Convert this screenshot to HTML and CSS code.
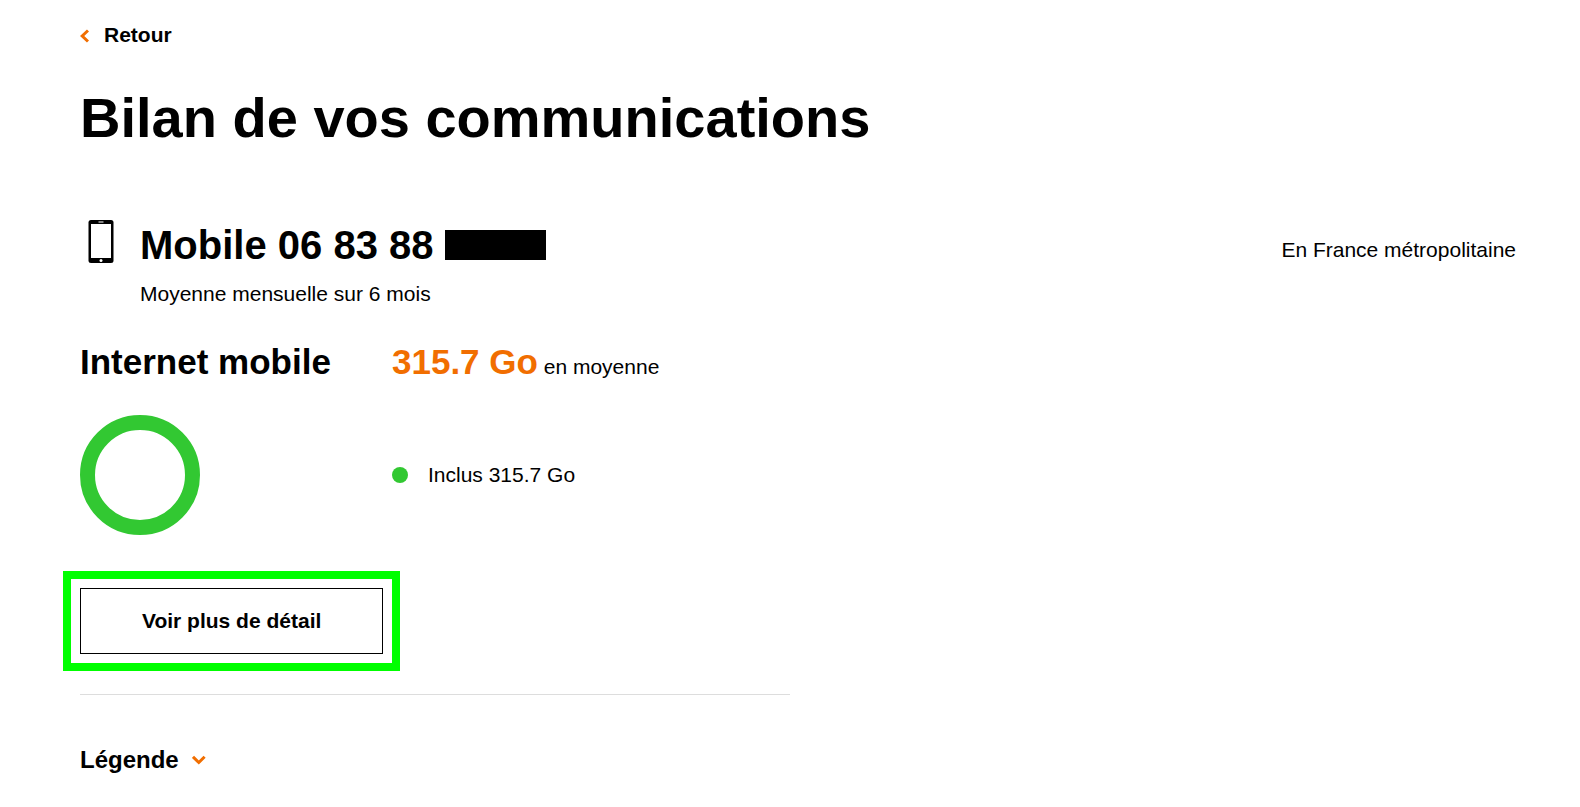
FILE: index.html
```
<!DOCTYPE html>
<html lang="fr">
<head>
    <meta charset="UTF-8">
    <meta name="viewport" content="width=device-width, initial-scale=1.0">
    <title>Bilan de vos communications</title>
    <link rel="stylesheet" href="styles.css">
</head>
<body>
    <header>
        <a class="retour" href="#">
            <svg class="chevron-gauche" width="9" height="14" viewBox="0 0 9 14" aria-hidden="true">
                <path d="M8 1.500 2.200 7 8 12.500"/>
            </svg>
            Retour
        </a>
        <h1>Bilan de vos communications</h1>
    </header>

    <main>
        <div class="ligne">
            <svg class="mobile" width="26" height="43" viewBox="0 0 26 43" aria-hidden="true">
                <rect x="0.500" width="25" height="43" rx="2.500"/>
                <path class="blanc" d="M3 4h20v34H3zM10.500 1.600h5v1h-5z"/>
                <circle class="blanc" cx="13" cy="40.500" r="1.500"/>
            </svg>
            <div class="numero">
                <h2>Mobile 06 83 88 <span class="masque"></span></h2>
                <p>Moyenne mensuelle sur 6 mois</p>
            </div>
            <p class="zone">En France métropolitaine</p>
        </div>

        <div class="colonnes">
            <section class="bilan">
                <div class="conso">
                    <h3>Internet mobile</h3>
                    <p><strong>315.7 Go</strong> en moyenne</p>
                </div>
                <div class="conso graphique">
                    <div class="anneau"></div>
                    <p class="inclus"><span class="puce"></span>Inclus 315.7 Go</p>
                </div>
                <button class="detail" type="button">Voir plus de détail</button>
                <hr>
                <button class="legende" type="button">
                    Légende
                    <svg class="chevron-bas" width="14" height="10" viewBox="0 0 14 10" aria-hidden="true">
                        <path d="M1 1.800 6.800 7.500 12.600 1.800"/>
                    </svg>
                </button>
            </section>
        </div>
    </main>
</body>
</html>
```

FILE: styles.css
```
:root{
    --orange: #f16e00;
    --vert: #32c832;
    --cadre: #00ff00;
}

*{
    margin: 0;
    padding: 0;
    box-sizing: border-box;
}

body{
    background-color: white;
    color: black;
    font-family: "Liberation Sans", Arial, Helvetica, sans-serif;
    font-size: 21px;
    line-height: 24px;
    padding: 23px 40px 32px 80px;
}

.retour{
    display: inline-flex;
    align-items: center;
    gap: 15px;
    color: black;
    font-weight: bold;
    text-decoration: none;
}

.chevron-gauche, .chevron-bas{
    fill: none;
    stroke: var(--orange);
    stroke-width: 3;
}

.chevron-gauche{
    margin-top: 2px;
}

h1{
    font-size: 56px;
    line-height: 64px;
    margin-top: 38px;
}

.ligne{
    display: flex;
    align-items: flex-start;
    margin-top: 70px;
    padding: 0 24px 0 8px;
}

.numero{
    flex: 1;
    margin: 1px 0 0 26px;
}

h2{
    display: flex;
    align-items: center;
    gap: 12px;
    font-size: 40px;
    line-height: 48px;
}

.numero p{
    margin-top: 13px;
}

.masque{
    width: 101px;
    height: 30px;
    background-color: black;
}

.zone{
    margin-top: 18px;
}

.mobile .blanc{
    fill: white;
}

.colonnes{
    display: grid;
    grid-template-columns: 1fr 1fr;
    gap: 40px;
    margin-top: 36px;
}

.conso{
    display: grid;
    grid-template-columns: 312px 1fr;
    align-items: center;
}

h3, .conso strong{
    font-size: 35px;
    line-height: 40px;
}

.conso strong{
    color: var(--orange);
}

.graphique{
    margin-top: 33px;
}

.anneau{
    width: 120px;
    height: 120px;
    border: 15px solid var(--vert);
    border-radius: 50%;
}

.inclus{
    display: flex;
    align-items: center;
    gap: 20px;
}

.puce{
    width: 16px;
    height: 16px;
    border-radius: 50%;
    background-color: var(--vert);
}

button{
    background: none;
    border: none;
    color: black;
    font: inherit;
    font-weight: bold;
    cursor: pointer;
}

.detail{
    display: block;
    margin-top: 53px;
    padding: 20px 61px;
    border: 1px solid black;
    outline: 8px solid var(--cadre);
    outline-offset: 9px;
}

hr{
    border: none;
    border-top: 1px solid #ddd;
    margin-top: 40px;
}

.legende{
    display: flex;
    align-items: center;
    gap: 13px;
    margin-top: 51px;
    font-size: 24px;
    line-height: 28px;
}
```
